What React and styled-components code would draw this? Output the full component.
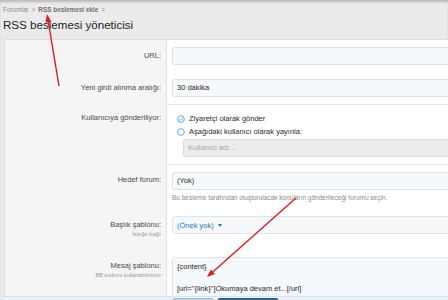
import styled, { createGlobalStyle } from "styled-components";

const GlobalStyle = createGlobalStyle`
  html, body {
    margin: 0;
    padding: 0;
    background: #ebebeb;
    font-family: "Liberation Sans", Arial, sans-serif;
  }
`;

const Page = styled.div`
  position: relative;
  width: 448px;
  height: 300px;
  overflow: hidden;
  background: #ebebeb;
  box-shadow: inset 0 3px 3px -1px rgba(0, 0, 0, 0.22);
`;

const Header = styled.div`
  padding: 6px 3px 7px;
`;

const Crumbs = styled.div`
  display: flex;
  align-items: center;
  gap: 3px;
  font-size: 6.4px;
  line-height: 8px;
  color: #8c8c8c;
`;

const Crumb = styled.span`
  font-weight: ${(p) => (p.$current ? "bold" : "normal")};
  color: ${(p) => (p.$current ? "#6e6e6e" : "#8c8c8c")};
`;

const Title = styled.h1`
  margin: 4px 0 0;
  font-size: 11.6px;
  line-height: 14px;
  font-weight: normal;
  color: #1d1d1d;
`;

const Panel = styled.div`
  width: 470px;
  margin-left: 4px;
  border-top: 1px solid #dedede;
  border-left: 1px solid #dedede;
  background: #fff;
`;

const Row = styled.div`
  display: grid;
  grid-template-columns: 162px 1fr;
`;

const Dt = styled.div`
  background: #f5f5f5;
  border-right: 1px solid #e2e2e2;
  text-align: right;
  padding: ${(p) => p.$pad || "7px"} 5px 0 0;
`;

const Label = styled.div`
  font-size: 7.5px;
  line-height: ${(p) => p.$lh || "18px"};
  color: #4a4a4a;
`;

const SubLabel = styled.div`
  font-size: 5.5px;
  line-height: 7px;
  color: #9a9a9a;
`;

const Dd = styled.div`
  padding: ${(p) => p.$pad || "7px 0 7px 5px"};
  border-top: ${(p) => (p.$sep ? "1px solid #e4e4e4" : "none")};
`;

const Input = styled.div`
  box-sizing: border-box;
  height: 18px;
  margin-left: ${(p) => (p.$indent ? "11px" : "0")};
  padding: 0 4px;
  border: 1px solid ${(p) => (p.$disabled ? "#dadada" : "#dde2e7")};
  border-radius: 3px;
  background: ${(p) => (p.$disabled ? "#ececec" : "#f6f9fc")};
  font-size: 7.5px;
  line-height: 16px;
  color: ${(p) => (p.$disabled ? "#a8a8a8" : "#2a2a2a")};
`;

const Choice = styled.div`
  display: flex;
  align-items: center;
  gap: 4px;
  height: 13px;
  padding-left: 5px;
  font-size: 7.5px;
  color: #2a2a2a;
`;

const Hint = styled.div`
  margin-top: 3px;
  font-size: 6.5px;
  line-height: 10px;
  color: #8a8a8a;
`;

const Select = styled.div`
  box-sizing: border-box;
  height: 18px;
  display: flex;
  align-items: center;
  gap: 4px;
  padding: 0 4px;
  border: 1px solid #dfe5ea;
  border-radius: 3px;
  background: #f6f9fc;
  font-size: 7.5px;
  color: #2577b1;
`;

const Caret = styled.span`
  width: 0;
  height: 0;
  border-left: 2.5px solid transparent;
  border-right: 2.5px solid transparent;
  border-top: 3px solid #2577b1;
`;

const TextArea = styled.textarea`
  display: block;
  box-sizing: border-box;
  width: 100%;
  height: 60px;
  margin: 0;
  padding: 3px 4px;
  border: 1px solid #dde2e7;
  border-radius: 3px;
  background: #f6f9fc;
  font-family: "Liberation Sans", Arial, sans-serif;
  font-size: 7.5px;
  line-height: 11px;
  color: #2a2a2a;
  resize: none;
  overflow: hidden;
`;

const Footer = styled.div`
  position: absolute;
  left: 3px;
  right: 0;
  top: 296px;
  height: 10px;
  display: flex;
  gap: 3px;
  padding-left: 169px;
  background: #e9f3fa;
  border-top: 1px solid #d6e3ec;
`;

const Button = styled.div`
  width: ${(p) => p.$w}px;
  height: 10px;
  margin-top: 1px;
  border-radius: 3px;
  background: ${(p) => (p.$primary ? "#2f6fa3" : "#b9d3e6")};
  border: 1px solid ${(p) => (p.$primary ? "#275d8a" : "#9fbfd6")};
`;

const Arrows = styled.svg`
  position: absolute;
  left: 0;
  top: 0;
  pointer-events: none;
`;

const RadioIcon = ({ checked }) => (
  <svg width="8" height="8" viewBox="0 0 8 8">
    <circle cx="4" cy="4" r="3.3" fill="none" stroke="#47a7eb" strokeWidth="0.9" />
    {checked && (
      <path d="M2.4 4.1 L3.6 5.2 L5.7 2.9" fill="none" stroke="#47a7eb" strokeWidth="0.9" />
    )}
  </svg>
);

const Arrow = ({ x1, y1, x2, y2 }) => {
  const a = Math.atan2(y2 - y1, x2 - x1);
  const len = 8;
  const w = 3;
  const bx = x2 - len * Math.cos(a);
  const by = y2 - len * Math.sin(a);
  const px = -Math.sin(a) * w;
  const py = Math.cos(a) * w;
  return (
    <g>
      <line x1={x1} y1={y1} x2={bx} y2={by} stroke="#e01b22" strokeWidth="1.4" />
      <polygon
        points={`${x2},${y2} ${bx + px},${by + py} ${bx - px},${by - py}`}
        fill="#e01b22"
      />
    </g>
  );
};

export default function App() {
  return (
    <>
      <GlobalStyle />
      <Page>
        <Header>
          <Crumbs>
            <Crumb>Forumlar</Crumb>
            <span>&gt;</span>
            <Crumb $current>RSS beslemesi ekle</Crumb>
            <span>&gt;</span>
          </Crumbs>
          <Title>RSS beslemesi yöneticisi</Title>
        </Header>

        <Panel>
          <Row>
            <Dt>
              <Label>URL:</Label>
            </Dt>
            <Dd>
              <Input />
            </Dd>
          </Row>
          <Row>
            <Dt>
              <Label>Yeni girdi alınma aralığı:</Label>
            </Dt>
            <Dd>
              <Input>30 dakika</Input>
            </Dd>
          </Row>
          <Row>
            <Dt $pad="7px">
              <Label $lh="13px">Kullanıcıya gönderiliyor:</Label>
            </Dt>
            <Dd $sep>
              <Choice>
                <RadioIcon checked />
                Ziyaretçi olarak gönder
              </Choice>
              <Choice>
                <RadioIcon />
                Aşağıdaki kullanıcı olarak yayınla:
              </Choice>
              <Input $indent $disabled style={{ marginTop: 1 }}>
                Kullanıcı adı...
              </Input>
            </Dd>
          </Row>
          <Row>
            <Dt>
              <Label>Hedef forum:</Label>
            </Dt>
            <Dd $sep $pad="7px 0 6px 5px">
              <Input>(Yok)</Input>
              <Hint>
                Bu besleme tarafından oluşturulacak konuların gönderileceği forumu seçin.
              </Hint>
            </Dd>
          </Row>
          <Row>
            <Dt $pad="10px">
              <Label $lh="12px">Başlık şablonu:</Label>
              <SubLabel>İsteğe bağlı</SubLabel>
            </Dt>
            <Dd $pad="7px 0 16px 5px">
              <Select>
                (Önek yok)
                <Caret />
              </Select>
            </Dd>
          </Row>
          <Row>
            <Dt $pad="10px">
              <Label $lh="12px">Mesaj şablonu:</Label>
              <SubLabel>BB kodunu kullanabilirsiniz</SubLabel>
            </Dt>
            <Dd $pad="7px 0 7px 5px">
              <TextArea
                readOnly
                defaultValue={'{content}\n\n[url="{link}"]Okumaya devam et...[/url]'}
              />
            </Dd>
          </Row>
        </Panel>

        <Footer>
          <Button $w={40} />
          <Button $w={60} $primary />
        </Footer>

        <Arrows width="448" height="300" viewBox="0 0 448 300">
          <Arrow x1={59} y1={86} x2={47} y2={14} />
          <Arrow x1={296} y1={198} x2={207} y2={277} />
        </Arrows>
      </Page>
    </>
  );
}
